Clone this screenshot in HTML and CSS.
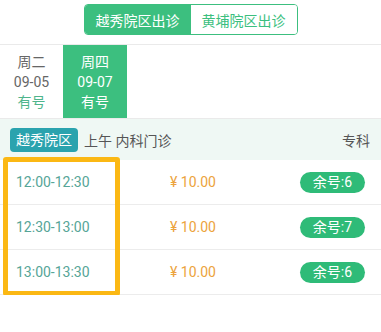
FILE: index.html
```html
<!DOCTYPE html>
<html lang="zh-CN">
<head>
  <meta charset="UTF-8">
  <meta name="viewport" content="width=device-width, initial-scale=1.0">
  <title>出诊排班</title>
  <link rel="stylesheet" href="styles.css">
</head>
<body>
  <div class="tabs">
    <div class="segment">
      <button class="seg active">越秀院区出诊</button>
      <button class="seg">黄埔院区出诊</button>
    </div>
  </div>

  <div class="dates">
    <div class="date">
      <span class="week">周二</span>
      <span class="day">09-05</span>
      <span class="status">有号</span>
    </div>
    <div class="date active">
      <span class="week">周四</span>
      <span class="day">09-07</span>
      <span class="status">有号</span>
    </div>
  </div>

  <div class="clinic">
    <span class="campus">越秀院区</span>
    <span class="clinic-name">上午 内科门诊</span>
    <span class="clinic-type">专科</span>
  </div>

  <div class="slots">
    <div class="slot">
      <span class="time">12:00-12:30</span>
      <span class="price">¥ 10.00</span>
      <span class="remain">余号:6</span>
    </div>
    <div class="slot">
      <span class="time">12:30-13:00</span>
      <span class="price">¥ 10.00</span>
      <span class="remain">余号:7</span>
    </div>
    <div class="slot">
      <span class="time">13:00-13:30</span>
      <span class="price">¥ 10.00</span>
      <span class="remain">余号:6</span>
    </div>
    <div class="highlight"></div>
  </div>
</body>
</html>
```

FILE: styles.css
```css
body {
  margin: 0;
  font-family: Roboto, "Noto Sans CJK SC", sans-serif;
  font-size: 14px;
  color: #555;
  background: #fff;
}
.tabs {
  display: flex;
  justify-content: center;
  padding: 4px 0 9px;
  border-bottom: 1px solid #eaeaea;
}
.segment {
  display: flex;
  border: 1px solid #3cbf7f;
  border-radius: 4px;
  overflow: hidden;
}
.seg {
  width: 106px;
  height: 29px;
  border: none;
  margin: 0;
  padding: 0;
  font-family: inherit;
  font-size: 14px;
  background: #fff;
  color: #3cbf7f;
}
.seg.active {
  background: #3cbf7f;
  color: #fff;
}
.dates {
  display: flex;
  border-bottom: 1px solid #eaeaea;
}
.date {
  width: 63px;
  height: 73px;
  display: flex;
  flex-direction: column;
  align-items: center;
  justify-content: center;
  line-height: 20px;
  color: #666;
}
.date .status {
  color: #4fb58c;
}
.date.active {
  width: 64px;
  background: #3cbf7f;
  color: #fff;
}
.date.active .status {
  color: #fff;
}
.clinic {
  display: flex;
  align-items: center;
  height: 41px;
  padding: 0 11px 0 10px;
  background: #eff8f4;
  color: #555;
}
.campus {
  background: #2aa3ae;
  color: #fff;
  border-radius: 4px;
  padding: 0 6px;
  height: 24px;
  line-height: 24px;
  margin-right: 6px;
}
.clinic-type {
  margin-left: auto;
  color: #555;
}
.slots {
  position: relative;
}
.slot {
  display: flex;
  align-items: center;
  height: 44px;
  padding: 0 16px;
  border-bottom: 1px solid #ececec;
}
.time {
  width: 150px;
  color: #56a597;
}
.price {
  flex: 1;
  color: #eca33c;
  padding-left: 4px;
}
.remain {
  background: #2fbb78;
  color: #fff;
  border-radius: 11px;
  width: 65px;
  height: 21px;
  line-height: 21px;
  text-align: center;
}
.highlight {
  position: absolute;
  left: 3px;
  top: -3px;
  width: 107px;
  height: 129px;
  border: 5px solid #fbb814;
  border-radius: 3px;
}
```
